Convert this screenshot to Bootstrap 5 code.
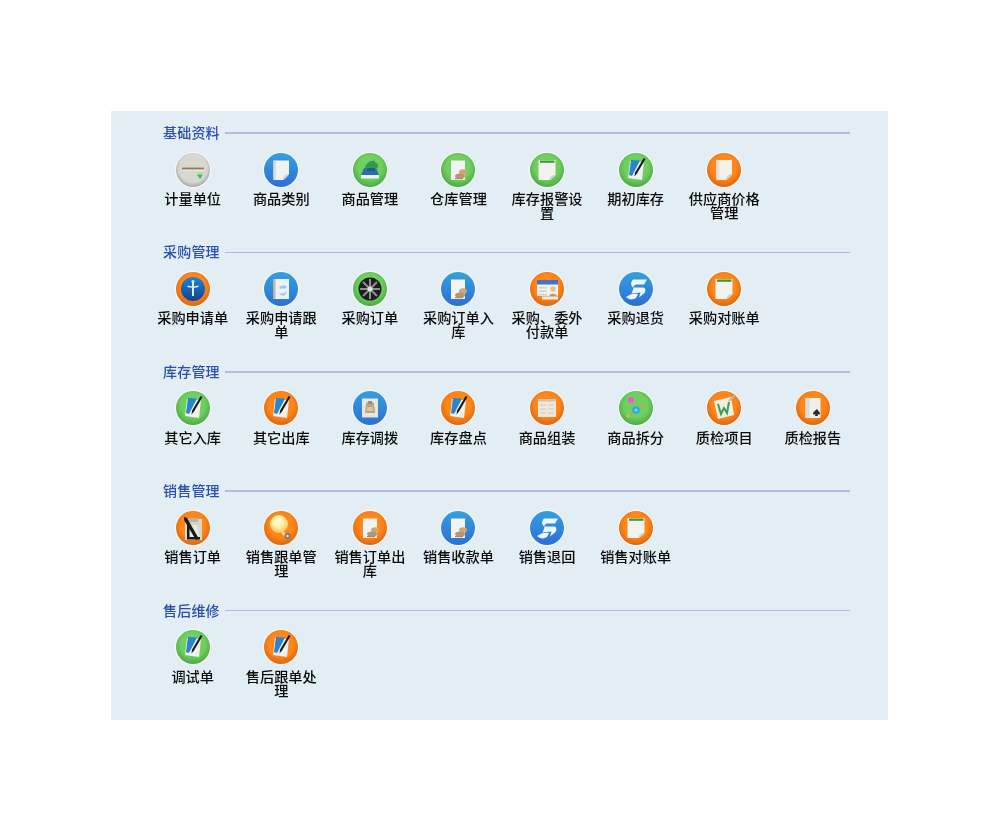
<!DOCTYPE html>
<html lang="zh-CN">
<head>
<meta charset="utf-8">
<title>模块导航</title>
<link href="https://cdn.jsdelivr.net/npm/bootstrap@5.3.0/dist/css/bootstrap.min.css" rel="stylesheet">
<style>
html,body{background:#fff;height:100%}
.sheet{width:777px;height:609px;margin:111px 0 0 111px;padding:12px 38px 0 37.4px;background:#e3eef4;font-family:"Noto Sans CJK SC","Liberation Sans",sans-serif;filter:blur(.45px)}
.block{height:119.4px}
.head{height:20px;padding-left:14.6px;margin-bottom:7.5px;gap:5px}
.head-text{color:#2a4fae;font-size:14px;line-height:20px;letter-spacing:.2px;font-weight:500;margin-top:-2px}
.head-rule{height:1.5px;background:#adbfdd}
.tiles{display:grid;grid-template-columns:repeat(8,88.6px);margin-right:-10px}
.tile{text-align:center}
.orb{display:block;width:38px;height:38px;margin:0 auto 2.5px}
.cap{width:74px;margin:0 auto;font-size:14.2px;line-height:14px;color:#0c0c0c;font-weight:500}
.defs{position:absolute;width:0;height:0}
</style>
</head>
<body>
<svg class="defs" aria-hidden="true">
<defs>
<radialGradient id="gG" cx=".5" cy=".42" r=".58"><stop offset=".6" stop-color="#6fd05f"/><stop offset="1" stop-color="#4ba945"/></radialGradient>
<radialGradient id="gO" cx=".5" cy=".42" r=".58"><stop offset=".6" stop-color="#ff871a"/><stop offset="1" stop-color="#dc6710"/></radialGradient>
<linearGradient id="gB" x1="0" y1="0" x2="0" y2="1"><stop offset="0" stop-color="#35a0de"/><stop offset="1" stop-color="#2d6fd6"/></linearGradient>
<radialGradient id="gS" cx=".5" cy=".45" r=".55"><stop offset=".75" stop-color="#d8d8d3"/><stop offset="1" stop-color="#a5a5a1"/></radialGradient>
<linearGradient id="gGlobe" x1="0" y1="0" x2="0" y2="1"><stop offset="0" stop-color="#1f82d8"/><stop offset="1" stop-color="#12428e"/></linearGradient>
<radialGradient id="gBulb" cx=".45" cy=".4" r=".6"><stop offset=".35" stop-color="#fff6c4"/><stop offset="1" stop-color="#ffc94d"/></radialGradient>

<symbol id="rG" viewBox="0 0 38 38"><circle cx="19" cy="19" r="18.2" fill="#f4f8fa"/><circle cx="19" cy="19" r="17" fill="url(#gG)"/></symbol>
<symbol id="rO" viewBox="0 0 38 38"><circle cx="19" cy="19" r="18.2" fill="#f4f8fa"/><circle cx="19" cy="19" r="17" fill="url(#gO)"/></symbol>
<symbol id="rB" viewBox="0 0 38 38"><circle cx="19" cy="19" r="18.2" fill="#f4f8fa"/><circle cx="19" cy="19" r="17" fill="url(#gB)"/></symbol>
<symbol id="rS" viewBox="0 0 38 38"><circle cx="19" cy="19" r="18.2" fill="#f4f8fa"/><circle cx="19" cy="19" r="17" fill="url(#gS)"/></symbol>

<symbol id="iUnit" viewBox="0 0 38 38"><path d="M8 17.500h22" stroke="#9a7a4e" stroke-width="1.800"/><path d="M8 19.300h22" stroke="#ecebe6" stroke-width="1"/><path d="M23 23.500h6l-3 4.500z" fill="#3fb84a"/><path d="M24.500 21.500h3v2.500h-3z" fill="#8fe08f"/></symbol>
<symbol id="iPage" viewBox="0 0 38 38"><path d="M11.500 9.500h15.500v13.500c-2 3-4 5-6 6h-9.500z" fill="#f1f3f3"/><path d="M27 23c-2 3-4 5-6 6 0-3 2-6 6-6z" fill="#c8d0d4"/><path d="M11.500 9.500h2.500v19.500h-2.500z" fill="#d7ddd5"/></symbol>
<symbol id="iGoods" viewBox="0 0 38 38"><path d="M10 24h18v3.500H10z" fill="#eef2f4"/><path d="M10 24l3-7h12l3 7z" fill="#2b6fa8"/><path d="M14 16c2-5 6-7 10-6-1 2 3 2 3 4 0 3-2 6-6 6s-6-1-7-4z" fill="#2f9a52"/><path d="M16 17h8v3h-8z" fill="#1b5f8c"/></symbol>
<symbol id="iStock" viewBox="0 0 38 38"><path d="M12 9.500h14v19.500H12z" fill="#f3f4f1"/><ellipse cx="24" cy="21" rx="4" ry="2.800" fill="#cda679"/><ellipse cx="21" cy="25" rx="5" ry="2.500" fill="#bd9468"/><path d="M16 27h8v1.200h-8z" fill="#a38a6f"/></symbol>
<symbol id="iNote" viewBox="0 0 38 38"><path d="M10.500 9h17v15c-2 2-4 4-6 5h-11z" fill="#f2f3ee"/><path d="M27.500 24c-2 2-4 4-6 5 0-3 2-5 6-5z" fill="#cfd3cb"/><path d="M12 9.500h14.500v2.300H12z" fill="#3e9a2e"/></symbol>
<symbol id="iPen" viewBox="0 0 38 38"><path d="M13 10l14 1-2 18-14-2z" fill="#eef1ee"/><path d="M14 9l9 .5-8 15.500-3-1z" fill="#2a86cc"/><path d="M28.500 8l-8.500 14.500-2.500 3 .6-4 8.600-14.500z" fill="#1a1a1a"/></symbol>
<symbol id="iOrange" viewBox="0 0 38 38"><path d="M11.500 9h15.500v14c-2 3-4 5-6 6h-9.500z" fill="#f6f1e6"/><path d="M27 23c-2 3-4 5-6 6 0-3 2-6 6-6z" fill="#d6cdbb"/><path d="M11.500 9h3v20h-3z" fill="#dfe3e4"/></symbol>
<symbol id="iCross" viewBox="0 0 38 38"><circle cx="19" cy="19" r="12" fill="url(#gGlobe)"/><path d="M18 12h2v14h-2z" fill="#dcecf8"/><path d="M13.500 15.500c3 1 8 1 11 0v1.600c-3 1-8 1-11 0z" fill="#dcecf8"/><circle cx="19" cy="11.500" r="1.500" fill="#dcecf8"/></symbol>
<symbol id="iReq" viewBox="0 0 38 38"><path d="M11.500 9h15.500v20H11.500z" fill="#ecf2f8"/><path d="M11.500 9h2v20h-2z" fill="#c9b98e"/><path d="M17 18c2-3 6-3 8-1l-3 2c-1-1-2-1-3 0zM17 23c2 1 5 1 8-2l-2 4c-2 1-4 1-6-2z" fill="#9cc6ea"/></symbol>
<symbol id="iWheel" viewBox="0 0 38 38"><circle cx="19" cy="19" r="11.500" fill="#1e1e1e"/><path d="M19 9v20M9 19h20M12 12l14 14M26 12L12 26" stroke="#8f8f8f" stroke-width="2"/><circle cx="19" cy="19" r="2.500" fill="#e2e2e2"/></symbol>
<symbol id="iForm" viewBox="0 0 38 38"><path d="M9 10h21v16H9z" fill="#f3f2ee"/><path d="M9 10h21v4.500H9z" fill="#3d74cf"/><path d="M11 17h8v1.400h-8zM11 20.500h8v1.400h-8zM11 24h8v1.400h-8z" fill="#cfcfc8"/><circle cx="25" cy="19" r="2.800" fill="#eabd96"/><path d="M20.500 27c1-4.500 8-4.500 9 0z" fill="#dc8a5c"/><path d="M14 26.500h16v3H14z" fill="#ecebe6"/></symbol>
<symbol id="iReturn" viewBox="0 0 38 38"><path d="M15 9.500h15l-3 5H18.500l-3 3H26c3 0 3 4 1 6l-5 4 1.500-5-9 1 2-5-2-3c-1-2 0-4.500 1.500-6z" fill="#eef6fb"/><path d="M9 27c4-3 8-4 12-3l-2 4c-3 2-7 2-10-1z" fill="#eef6fb"/></symbol>
<symbol id="iBag" viewBox="0 0 38 38"><path d="M11 9.500h16v19H11z" fill="#e9e6dc"/><path d="M15 15c0-3 8-3 8 0l1 9H14z" fill="#bfa485"/><path d="M17 12h4v3h-4z" fill="#a58c6f"/><path d="M16 18h6v4h-6z" fill="#d6c6ac"/></symbol>
<symbol id="iPaper" viewBox="0 0 38 38"><path d="M10 10h18v18H10z" fill="#efe8dc"/><path d="M10 10h18v2.500H10z" fill="#c9c4ba"/><path d="M12 15h6v2h-6zM20 15h6v2h-6zM12 19h6v2h-6zM20 19h6v2h-6zM12 23h6v2h-6zM20 23h6v2h-6z" fill="#dfd8cb"/></symbol>
<symbol id="iNodes" viewBox="0 0 38 38"><path d="M14 11l5 9 6-4M19 20l-8 7" stroke="#bda55e" stroke-width="1.400" fill="none"/><circle cx="14" cy="11" r="3" fill="#ee56d6"/><circle cx="19" cy="21" r="3.800" fill="#2ba6ee"/><circle cx="19" cy="21" r="1.600" fill="#8ad8ff"/><circle cx="26" cy="16" r="1.800" fill="#d8a24a"/><circle cx="11" cy="27" r="1.800" fill="#c8b85a"/></symbol>
<symbol id="iCheck" viewBox="0 0 38 38"><path d="M9 12l17-4 3 18-16 4z" fill="#f0eee2"/><path d="M13 15l3 10 3-6 3 5 2-11" stroke="#3f9e4d" stroke-width="2" fill="none"/><path d="M24 12l6-6" stroke="#b8b8a8" stroke-width="2"/></symbol>
<symbol id="iReport" viewBox="0 0 38 38"><path d="M11.500 9h15v20h-15z" fill="#efefec"/><path d="M11.500 9h4v20h-4z" fill="#dbdbd7"/><path d="M23 20c1 2 3 3 3 4.500 0 1-1.500 1.500-2.500 .5l.5 2h-3l.5-2c-1 1-2.500 .5-2.500-.5 0-1.500 2-2.500 4-4.500z" fill="#2a2a2a"/></symbol>
<symbol id="iSheet" viewBox="0 0 38 38"><path d="M11 10h17v21H11z" fill="#d8d6c8"/><path d="M15 9h9v4h-9z" fill="#b7b5a6"/><path d="M14 16h9l3 13h-12z" fill="#e9e7da"/><path d="M10 8l3 1 12 21-3 1-12-20z" fill="#1a1a1a"/><path d="M13 14h2.500v16H13zM13 28h13v2.400H13z" fill="#1a1a1a"/></symbol>
<symbol id="iBulb" viewBox="0 0 38 38"><circle cx="17" cy="15" r="9" fill="url(#gBulb)"/><path d="M21 22l4 4-2 2-4-4z" fill="#f2d97a"/><circle cx="25.500" cy="27" r="3" fill="#7c7468"/><circle cx="25.500" cy="27" r="1.300" fill="#e6e2d8"/></symbol>
</defs>
</svg>

<main class="sheet">
<section class="block">
<div class="head d-flex align-items-center"><span class="head-text">基础资料</span><span class="head-rule flex-grow-1"></span></div>
<div class="tiles">
<div class="tile"><svg class="orb" viewBox="0 0 38 38"><use href="#rS"/><use href="#iUnit"/></svg><div class="cap">计量单位</div></div>
<div class="tile"><svg class="orb" viewBox="0 0 38 38"><use href="#rB"/><use href="#iPage"/></svg><div class="cap">商品类别</div></div>
<div class="tile"><svg class="orb" viewBox="0 0 38 38"><use href="#rG"/><use href="#iGoods"/></svg><div class="cap">商品管理</div></div>
<div class="tile"><svg class="orb" viewBox="0 0 38 38"><use href="#rG"/><use href="#iStock"/></svg><div class="cap">仓库管理</div></div>
<div class="tile"><svg class="orb" viewBox="0 0 38 38"><use href="#rG"/><use href="#iNote"/></svg><div class="cap">库存报警设置</div></div>
<div class="tile"><svg class="orb" viewBox="0 0 38 38"><use href="#rG"/><use href="#iPen"/></svg><div class="cap">期初库存</div></div>
<div class="tile"><svg class="orb" viewBox="0 0 38 38"><use href="#rO"/><use href="#iOrange"/></svg><div class="cap">供应商价格管理</div></div>
</div>
</section>
<section class="block">
<div class="head d-flex align-items-center"><span class="head-text">采购管理</span><span class="head-rule flex-grow-1"></span></div>
<div class="tiles">
<div class="tile"><svg class="orb" viewBox="0 0 38 38"><use href="#rO"/><use href="#iCross"/></svg><div class="cap">采购申请单</div></div>
<div class="tile"><svg class="orb" viewBox="0 0 38 38"><use href="#rB"/><use href="#iReq"/></svg><div class="cap">采购申请跟单</div></div>
<div class="tile"><svg class="orb" viewBox="0 0 38 38"><use href="#rG"/><use href="#iWheel"/></svg><div class="cap">采购订单</div></div>
<div class="tile"><svg class="orb" viewBox="0 0 38 38"><use href="#rB"/><use href="#iStock"/></svg><div class="cap">采购订单入库</div></div>
<div class="tile"><svg class="orb" viewBox="0 0 38 38"><use href="#rO"/><use href="#iForm"/></svg><div class="cap">采购、委外付款单</div></div>
<div class="tile"><svg class="orb" viewBox="0 0 38 38"><use href="#rB"/><use href="#iReturn"/></svg><div class="cap">采购退货</div></div>
<div class="tile"><svg class="orb" viewBox="0 0 38 38"><use href="#rO"/><use href="#iNote"/></svg><div class="cap">采购对账单</div></div>
</div>
</section>
<section class="block">
<div class="head d-flex align-items-center"><span class="head-text">库存管理</span><span class="head-rule flex-grow-1"></span></div>
<div class="tiles">
<div class="tile"><svg class="orb" viewBox="0 0 38 38"><use href="#rG"/><use href="#iPen"/></svg><div class="cap">其它入库</div></div>
<div class="tile"><svg class="orb" viewBox="0 0 38 38"><use href="#rO"/><use href="#iPen"/></svg><div class="cap">其它出库</div></div>
<div class="tile"><svg class="orb" viewBox="0 0 38 38"><use href="#rB"/><use href="#iBag"/></svg><div class="cap">库存调拨</div></div>
<div class="tile"><svg class="orb" viewBox="0 0 38 38"><use href="#rO"/><use href="#iPen"/></svg><div class="cap">库存盘点</div></div>
<div class="tile"><svg class="orb" viewBox="0 0 38 38"><use href="#rO"/><use href="#iPaper"/></svg><div class="cap">商品组装</div></div>
<div class="tile"><svg class="orb" viewBox="0 0 38 38"><use href="#rG"/><use href="#iNodes"/></svg><div class="cap">商品拆分</div></div>
<div class="tile"><svg class="orb" viewBox="0 0 38 38"><use href="#rO"/><use href="#iCheck"/></svg><div class="cap">质检项目</div></div>
<div class="tile"><svg class="orb" viewBox="0 0 38 38"><use href="#rO"/><use href="#iReport"/></svg><div class="cap">质检报告</div></div>
</div>
</section>
<section class="block">
<div class="head d-flex align-items-center"><span class="head-text">销售管理</span><span class="head-rule flex-grow-1"></span></div>
<div class="tiles">
<div class="tile"><svg class="orb" viewBox="0 0 38 38"><use href="#rO"/><use href="#iSheet"/></svg><div class="cap">销售订单</div></div>
<div class="tile"><svg class="orb" viewBox="0 0 38 38"><use href="#rO"/><use href="#iBulb"/></svg><div class="cap">销售跟单管理</div></div>
<div class="tile"><svg class="orb" viewBox="0 0 38 38"><use href="#rO"/><use href="#iStock"/></svg><div class="cap">销售订单出库</div></div>
<div class="tile"><svg class="orb" viewBox="0 0 38 38"><use href="#rB"/><use href="#iStock"/></svg><div class="cap">销售收款单</div></div>
<div class="tile"><svg class="orb" viewBox="0 0 38 38"><use href="#rB"/><use href="#iReturn"/></svg><div class="cap">销售退回</div></div>
<div class="tile"><svg class="orb" viewBox="0 0 38 38"><use href="#rO"/><use href="#iNote"/></svg><div class="cap">销售对账单</div></div>
</div>
</section>
<section class="block">
<div class="head d-flex align-items-center"><span class="head-text">售后维修</span><span class="head-rule flex-grow-1"></span></div>
<div class="tiles">
<div class="tile"><svg class="orb" viewBox="0 0 38 38"><use href="#rG"/><use href="#iPen"/></svg><div class="cap">调试单</div></div>
<div class="tile"><svg class="orb" viewBox="0 0 38 38"><use href="#rO"/><use href="#iPen"/></svg><div class="cap">售后跟单处理</div></div>
</div>
</section>
</main>
<script src="https://cdn.jsdelivr.net/npm/bootstrap@5.3.0/dist/js/bootstrap.bundle.min.js"></script>
</body>
</html>
